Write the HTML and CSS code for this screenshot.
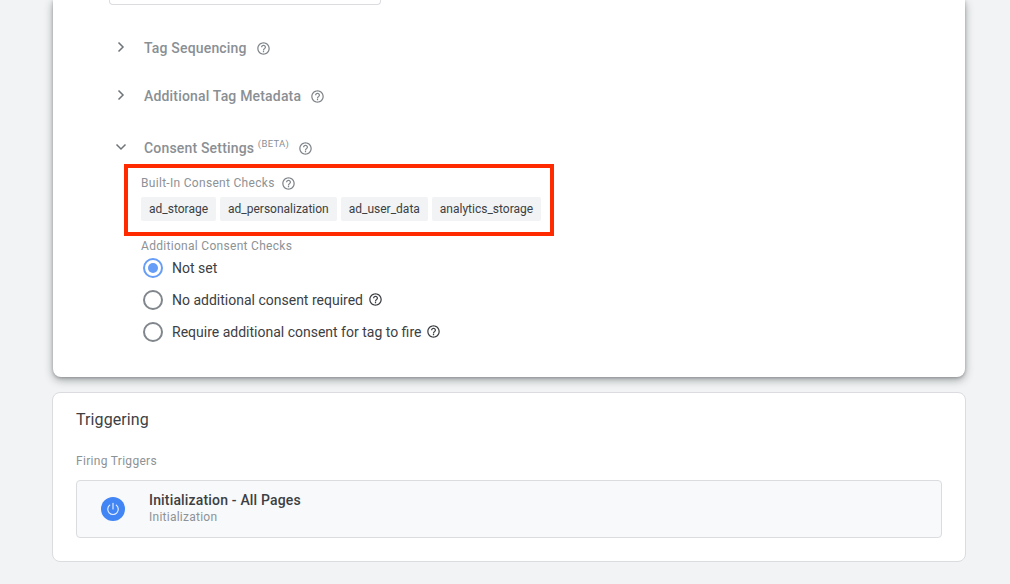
FILE: index.html
```html
<!DOCTYPE html>
<html lang="en">
<head>
<meta charset="utf-8">
<title>Tag configuration</title>
<link rel="stylesheet" href="styles.css">
</head>
<body>
<svg class="defs" width="0" height="0" aria-hidden="true">
  <symbol id="help" viewBox="0 0 24 24">
    <path fill="currentColor" d="M11 18h2v-2h-2v2zm1-16C6.48 2 2 6.48 2 12s4.48 10 10 10 10-4.48 10-10S17.52 2 12 2zm0 18c-4.41 0-8-3.59-8-8s3.59-8 8-8 8 3.59 8 8-3.59 8-8 8zm0-14c-2.21 0-4 1.79-4 4h2c0-1.1.9-2 2-2s2 .9 2 2c0 2-3 1.75-3 5h2c0-2.25 3-2.5 3-5 0-2.21-1.79-4-4-4z"/>
  </symbol>
</svg>
<main class="page">
  <section class="card card-raised">
    <div class="stub"></div>
    <div class="section section-first">
      <svg class="chev" viewBox="0 0 18 18"><path d="M6.5 4.5 11 9l-4.5 4.5"/></svg>
      <span class="section-title">Tag Sequencing</span>
      <svg class="help"><use href="#help"/></svg>
    </div>
    <div class="section section-second">
      <svg class="chev" viewBox="0 0 18 18"><path d="M6.5 4.5 11 9l-4.5 4.5"/></svg>
      <span class="section-title">Additional Tag Metadata</span>
      <svg class="help"><use href="#help"/></svg>
    </div>
    <div class="section section-third">
      <svg class="chev" viewBox="0 0 18 18"><path d="M4.5 6.5 9 11l4.5-4.5"/></svg>
      <span class="section-title">Consent Settings <sup class="beta">(BETA)</sup></span>
      <svg class="help"><use href="#help"/></svg>
    </div>
    <div class="consent">
      <div class="field-label built-in">Built-In Consent Checks <svg class="help help-label"><use href="#help"/></svg></div>
      <div class="chips">
        <span class="chip">ad_storage</span>
        <span class="chip">ad_personalization</span>
        <span class="chip">ad_user_data</span>
        <span class="chip">analytics_storage</span>
      </div>
      <div class="field-label additional">Additional Consent Checks</div>
      <div class="radios">
        <div class="radio-row"><span class="radio radio-on"></span><span>Not set</span></div>
        <div class="radio-row"><span class="radio"></span><span>No additional consent required</span><svg class="help help-dark"><use href="#help"/></svg></div>
        <div class="radio-row"><span class="radio"></span><span>Require additional consent for tag to fire</span><svg class="help help-dark"><use href="#help"/></svg></div>
      </div>
      <div class="highlight"></div>
    </div>
  </section>
  <section class="card card-flat">
    <h2 class="card-title">Triggering</h2>
    <div class="field-label firing">Firing Triggers</div>
    <div class="trigger">
      <span class="trigger-icon">
        <svg viewBox="0 0 24 24" width="18" height="18"><path d="M12 4.5v7.5" /><path d="M7.6 6.9a7 7 0 1 0 8.8 0"/></svg>
      </span>
      <div class="trigger-text">
        <div class="trigger-name">Initialization - All Pages</div>
        <div class="trigger-type">Initialization</div>
      </div>
    </div>
  </section>
</main>
</body>
</html>
```
FILE: styles.css
```css
* { box-sizing: border-box; }
html, body { margin: 0; height: 100%; }
body {
  background: #f1f3f4;
  font-family: Roboto, "Liberation Sans", sans-serif;
  color: #3c4043;
  overflow: hidden;
}
.defs { position: absolute; }
.page {
  padding: 0 44px 0 52px;
  display: flex;
  flex-direction: column;
  gap: 15px;
}
.card { background: #fff; }
.card-raised {
  margin: 0 1px;
  height: 377px;
  padding-left: 56px;
  border-radius: 0 0 8px 8px;
  box-shadow: 0 3px 8px rgba(60, 64, 67, .45), 0 1px 3px rgba(60, 64, 67, .3);
}
.stub {
  width: 272px;
  height: 5px;
  border: 1px solid #dadce0;
  border-top: 0;
  border-radius: 0 0 4px 4px;
}
.section {
  display: flex;
  align-items: center;
  height: 20px;
  color: #80868b;
}
.section-first { margin-top: 33px; }
.section-second { margin-top: 28px; }
.section-third { margin-top: 32px; }
.chev { width: 18px; height: 18px; fill: none; stroke: #6f7478; stroke-width: 1.5; margin-left: 3px; margin-right: 14px; position: relative; top: -1px; }
.section-title { font-size: 14px; font-weight: 500; letter-spacing: .18px; color: #8a8f94; white-space: nowrap; }
.beta { font-size: 9.5px; font-weight: 400; letter-spacing: .3px; vertical-align: 6px; line-height: 0; }
.help { width: 15px; height: 15px; color: #80868b; margin-left: 9px; flex: none; }
.help-label { margin-left: 6px; }
.help-dark { color: #3c4043; width: 15px; height: 15px; margin-left: 5px; position: relative; top: -1px; }
.consent { position: relative; padding-left: 32px; }
.field-label { font-size: 12px; letter-spacing: .3px; color: #8d9296; line-height: 14px; white-space: nowrap; }
.built-in { margin-top: 17px; display: flex; align-items: center; gap: 0; height: 16px; }
.chips { display: flex; gap: 4px; margin-top: 6px; }
.chip {
  height: 24px;
  padding: 0 8px;
  background: #f1f3f4;
  border-radius: 2px;
  font-size: 12px;
  line-height: 24px;
  color: #3c4043;
}
.additional { margin-top: 18px; }
.radios { margin-top: -1px; margin-left: 2px; }
.radio-row {
  display: flex;
  align-items: center;
  height: 32px;
  font-size: 14px;
  color: #3c4043;
}
.radio {
  width: 20px;
  height: 20px;
  border: 2px solid #80868b;
  border-radius: 50%;
  margin-right: 9px;
  flex: none;
  display: flex;
  align-items: center;
  justify-content: center;
}
.radio-on { border-color: #669df6; }
.radio-on::after { content: ""; width: 10px; height: 10px; border-radius: 50%; background: #669df6; }
.highlight {
  position: absolute;
  left: 15px;
  top: -11px;
  width: 430px;
  height: 72px;
  border: 4px solid #ff2a00;
  pointer-events: none;
}
.card-flat {
  height: 170px;
  padding: 0 23px;
  border: 1px solid #dadce0;
  border-radius: 8px;
}
.card-title { margin: 17px 0 0; font-size: 16px; font-weight: 400; line-height: 20px; letter-spacing: .1px; color: #3c4043; }
.firing { margin: 24px 0 0; }
.trigger {
  margin-top: 12px;
  height: 58px;
  background: #f8f9fa;
  border: 1px solid #dadce0;
  border-radius: 4px;
  display: flex;
  align-items: center;
  padding-left: 24px;
  gap: 24px;
}
.trigger-icon {
  width: 24px;
  height: 24px;
  border-radius: 50%;
  background: #4285f4;
  display: flex;
  align-items: center;
  justify-content: center;
  flex: none;
}
.trigger-icon svg { fill: none; stroke: #e8f0fe; stroke-width: 1.5; stroke-linecap: round; }
.trigger-name { font-size: 14px; font-weight: 500; letter-spacing: .17px; line-height: 17px; color: #3c4043; }
.trigger-type { font-size: 12px; letter-spacing: .25px; line-height: 17px; color: #8d9296; }
```
